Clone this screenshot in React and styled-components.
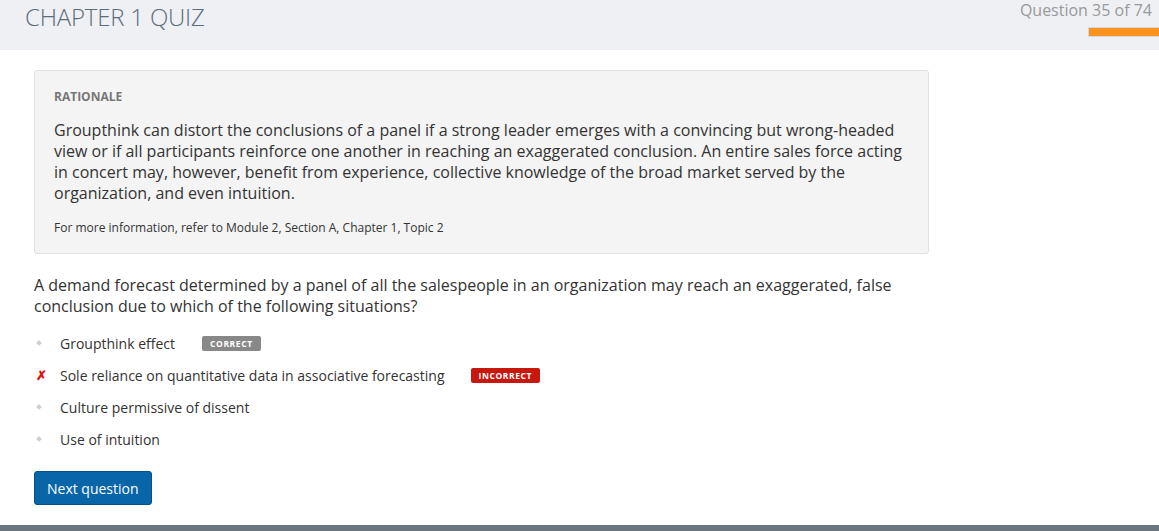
import styled, { createGlobalStyle } from "styled-components";

const GlobalStyle = createGlobalStyle`
    html, body {
        margin: 0;
        padding: 0;
        background: #fff;
        font-family: "Open Sans", "Liberation Sans", sans-serif;
        color: #333;
    }
`

const Page = styled.div`
    width: 1159px;
    height: 531px;
    display: flex;
    flex-direction: column;
    overflow: hidden;
`

const Header = styled.header`
    height: 50px;
    background: #eff0f4;
    display: flex;
    justify-content: space-between;
    padding: 0 0 0 25px;
`

const Title = styled.h1`
    margin: 2px 0 0;
    font-size: 24px;
    font-weight: 300;
    color: #5d6b78;
    line-height: 30px;
    letter-spacing: -0.2px;
`

const Progress = styled.div`
    display: flex;
    flex-direction: column;
    align-items: flex-end;
`

const Counter = styled.div`
    font-size: 16px;
    color: #999;
    line-height: 22px;
    margin-top: -1px;
    padding: 0 7px 0 0;
`

const Bar = styled.div`
    margin-top: 7px;
    width: 70px;
    height: 8px;
    background: #f7931e;
    box-shadow: 0 0 0 1px #d8d8d8;
`

const Main = styled.main`
    flex: 1;
    padding: 20px 230px 0 34px;
    display: flex;
    flex-direction: column;
`

const Rationale = styled.section`
    background: #f4f4f4;
    border: 1px solid #e1e1e1;
    border-radius: 3px;
    padding: 18px 19px 17px;
`

const Label = styled.div`
    font-size: 12px;
    font-weight: 700;
    color: #777;
    line-height: 16px;
    margin-bottom: 15px;
`

const Body = styled.p`
    margin: 0;
    font-size: 16px;
    line-height: 21px;
    color: #333;
`

const Note = styled.p`
    margin: 16px 0 0;
    font-size: 12px;
    line-height: 16px;
    color: #333;
`

const Question = styled.p`
    margin: 21px 0 10px;
    font-size: 16px;
    line-height: 21px;
    color: #333;
    padding-right: 20px;
`

const Options = styled.ul`
    list-style: none;
    margin: 0;
    padding: 0;
`

const Option = styled.li`
    display: flex;
    align-items: center;
    height: 32px;
    font-size: 14px;
    color: #333;
`

const Marker = styled.span`
    width: 26px;
    display: flex;
    justify-content: flex-start;
    padding-left: 2px;
    box-sizing: border-box;
`

const Dot = styled.span`
    width: 4px;
    height: 4px;
    margin-left: 1px;
    background: #ccc;
    transform: rotate(45deg);
`

const Cross = styled.span`
    color: #e01010;
    font-size: 13px;
    font-weight: 700;
    line-height: 1;
`

const Badge = styled.span`
    margin-left: ${p => p.$gap}px;
    padding: 0 8px;
    height: 15px;
    display: inline-flex;
    align-items: center;
    border-radius: 2px;
    font-size: 8.5px;
    font-weight: 700;
    letter-spacing: 0.6px;
    color: #fff;
    background: ${p => p.$bad ? "#c8170c" : "#888"};
`

const Button = styled.button`
    align-self: flex-start;
    margin-top: 16px;
    height: 34px;
    padding: 0 12px;
    border: 1px solid #0a4f86;
    border-radius: 3px;
    background: #0765a8;
    color: #fff;
    font-family: inherit;
    font-size: 14px;
    font-weight: 500;
`

const Footer = styled.div`
    height: 6px;
    background: #6b757d;
`

const options = [
    { text: "Groupthink effect", badge: "CORRECT", gap: 27 },
    { text: "Sole reliance on quantitative data in associative forecasting", badge: "INCORRECT", bad: true, wrong: true, gap: 26 },
    { text: "Culture permissive of dissent" },
    { text: "Use of intuition" },
]

export default function App() {
    return (
        <Page>
            <GlobalStyle/>
            <Header>
                <Title>CHAPTER 1 QUIZ</Title>
                <Progress>
                    <Counter>Question 35 of 74</Counter>
                    <Bar/>
                </Progress>
            </Header>
            <Main>
                <Rationale>
                    <Label>RATIONALE</Label>
                    <Body>
                        Groupthink can distort the conclusions of a panel if a strong leader emerges with a convincing but wrong-headed view or if all participants reinforce one another in reaching an exaggerated conclusion. An entire sales force acting in concert may, however, benefit from experience, collective knowledge of the broad market served by the organization, and even intuition.
                    </Body>
                    <Note>For more information, refer to Module 2, Section A, Chapter 1, Topic 2</Note>
                </Rationale>
                <Question>
                    A demand forecast determined by a panel of all the salespeople in an organization may reach an exaggerated, false conclusion due to which of the following situations?
                </Question>
                <Options>
                    {options.map(o => (
                        <Option key={o.text}>
                            <Marker>{o.wrong ? <Cross>✗</Cross> : <Dot/>}</Marker>
                            {o.text}
                            {o.badge && <Badge $bad={o.bad} $gap={o.gap}>{o.badge}</Badge>}
                        </Option>
                    ))}
                </Options>
                <Button>Next question</Button>
            </Main>
            <Footer/>
        </Page>
    )
}
